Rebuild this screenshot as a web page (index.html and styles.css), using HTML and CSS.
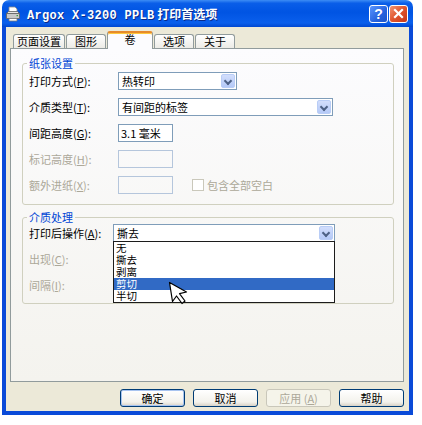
FILE: index.html
```html
<!DOCTYPE html>
<html lang="zh-CN">
<head>
  <meta charset="UTF-8" />
  <title>Argox X-3200 PPLB 打印首选项</title>
  <link rel="stylesheet" href="styles.css">
</head>
<body>
  <div class="window">
    <div class="titlebar">
      <svg class="app-icon" width="16" height="16" viewBox="0 0 16 16">
        <path d="M4 1h6l2 2v4H4z" fill="#fff" stroke="#8a8a8a" stroke-width="0.8"/>
        <path d="M1.5 7.5h13v5h-13z" fill="#c8c8c8" stroke="#5f5f5f" stroke-width="0.8"/>
        <path d="M1.5 7.5l2-2h9l2 2z" fill="#e6e6e6" stroke="#5f5f5f" stroke-width="0.8"/>
        <path d="M4 12.5h8v2.5H4z" fill="#fff" stroke="#7a7a7a" stroke-width="0.8"/>
        <rect x="11.5" y="9" width="1.5" height="1.2" fill="#3c9a3c"/>
      </svg>
      <span class="title"><span class="latin">Argox X-3200 PPLB</span> 打印首选项</span>
      <span class="caption-btns">
        <span class="cap-btn help">?</span>
        <span class="cap-btn close">
          <svg width="11" height="11" viewBox="0 0 11 11"><path d="M2 2l7 7M9 2l-7 7" stroke="#fff" stroke-width="2.2" stroke-linecap="square"/></svg>
        </span>
      </span>
    </div>

    <div class="client">
      <div class="tabs">
        <span class="tab">页面设置</span>
        <span class="tab">图形</span>
        <span class="tab active">卷</span>
        <span class="tab">选项</span>
        <span class="tab">关于</span>
      </div>

      <div class="panel">
        <fieldset class="group paper">
          <legend>纸张设置</legend>
          <div class="row">
            <label>打印方式(<u>P</u>):</label>
            <div class="combo w-short"><span class="value">热转印</span><span class="arrow"></span></div>
          </div>
          <div class="row">
            <label>介质类型(<u>T</u>):</label>
            <div class="combo w-long"><span class="value">有间距的标签</span><span class="arrow"></span></div>
          </div>
          <div class="row">
            <label>间距高度(<u>G</u>):</label>
            <div class="field">3.1 毫米</div>
          </div>
          <div class="row off">
            <label>标记高度(<u>H</u>):</label>
            <div class="field"></div>
          </div>
          <div class="row off">
            <label>额外进纸(<u>X</u>):</label>
            <div class="field"></div>
            <span class="check"></span>
            <span>包含全部空白</span>
          </div>
        </fieldset>

        <fieldset class="group media">
          <legend>介质处理</legend>
          <div class="row">
            <label>打印后操作(<u>A</u>):</label>
            <div class="combo w-wide">
              <span class="value">撕去</span><span class="arrow"></span>
              <div class="list">
                <div>无</div>
                <div>撕去</div>
                <div>剥离</div>
                <div class="sel">剪切</div>
                <div>半切</div>
              </div>
            </div>
          </div>
          <div class="row off">
            <label>出现(<u>C</u>):</label>
          </div>
          <div class="row off">
            <label>间隔(<u>I</u>):</label>
          </div>
        </fieldset>
      </div>

      <div class="buttons">
        <button class="btn default">确定</button>
        <button class="btn">取消</button>
        <button class="btn" disabled>应用 (<u>A</u>)</button>
        <button class="btn">帮助</button>
      </div>
    </div>

    <svg class="cursor" width="24" height="28" viewBox="0 0 24 28">
      <path d="M1.5 1.5l3 19 4-5.5 5.5 7.5 3-2.5-5.5-7.3 7-1.7z" fill="#fff" stroke="#000" stroke-width="1.2" stroke-linejoin="round"/>
    </svg>
  </div>
</body>
</html>
```

FILE: styles.css
```css
* {
  box-sizing: border-box;
}

body {
  margin: 0;
  background: #fff;
  font-family: "Noto Sans CJK SC", "Noto Sans", sans-serif;
  font-size: 11px;
  color: #000;
}

.window {
  position: relative;
  width: 411px;
  margin-left: 2px;
}

/* title bar */
.titlebar {
  display: flex;
  align-items: center;
  height: 27px;
  padding: 0 5px 0 3px;
  border-radius: 7px 7px 0 0;
  background: linear-gradient(#3d8df5 0, #0a5ee8 12%, #0054e3 45%, #0a5fec 85%, #0047d0 100%);
  color: #fff;
}

.app-icon {
  flex: none;
}

.title {
  margin-left: 6px;
  font-weight: bold;
  font-size: 12px;
  text-shadow: 1px 1px #0a2b8a;
  white-space: nowrap;
}

.title .latin {
  font-family: "Liberation Mono", "DejaVu Sans Mono", monospace;
  font-size: 12px;
  letter-spacing: 0.3px;
}

.caption-btns {
  display: flex;
  margin-left: auto;
  gap: 1px;
}

.cap-btn {
  display: flex;
  align-items: center;
  justify-content: center;
  width: 19px;
  height: 18px;
  border: 1px solid #fff;
  border-radius: 3px;
  font: bold 14px "Liberation Sans", sans-serif;
}

.cap-btn.help {
  background: linear-gradient(135deg, #5a95ff, #2663de 60%, #1d55c9);
}

.cap-btn.close {
  background: linear-gradient(135deg, #f29573, #e0542c 50%, #c4371a);
}

/* client area */
.client {
  border: 4px solid #0a4ad8;
  border-top: 0;
  background: #ece9d8;
  padding: 4px 5px 4px 4px;
}

.tabs {
  display: flex;
  align-items: flex-end;
  gap: 1px;
  height: 17px;
  padding-left: 3px;
  position: relative;
  z-index: 1;
}

.tab {
  height: 14px;
  min-width: 40px;
  padding: 0 3px;
  border: 1px solid #919b9c;
  border-bottom: 0;
  border-radius: 3px 3px 0 0;
  background: linear-gradient(#fff, #ecebe6);
  text-align: center;
  line-height: 13px;
}

.tab.active {
  width: 46px;
  height: 18px;
  margin-bottom: -1px;
  border-top: 2px solid #e68b2c;
  box-shadow: inset 0 1px #ffc83c;
  background: #fcfcfe;
  line-height: 12px;
}

.panel {
  height: 334px;
  padding: 8px 9px 0 11px;
  border: 1px solid #919b9c;
  background: linear-gradient(#fcfcfe, #f4f3ee);
}

/* group boxes */
.group {
  margin: 0;
  min-width: 0;
  padding: 2px 6px 10px;
  border: 1px solid #d0d0bf;
  border-radius: 3px;
}

.group legend {
  margin-left: -2px;
  padding: 0 2px;
  line-height: 13px;
  color: #0046d5;
}

.group.media {
  margin-top: 6px;
  padding-top: 0;
  padding-bottom: 9px;
}

.row {
  display: flex;
  align-items: center;
  height: 18px;
}

.row + .row {
  margin-top: 8px;
}

.paper label {
  width: 89px;
}

.media label {
  width: 84px;
}

.row.off {
  color: #aca899;
}

.combo {
  position: relative;
  display: flex;
  height: 18px;
  border: 1px solid #7f9db9;
  background: #fff;
  color: #000;
}

.combo .value {
  flex: 1;
  padding-left: 3px;
  line-height: 16px;
}

.combo .arrow {
  width: 14px;
  margin: 1px;
  border: 1px solid #b9cdf6;
  border-radius: 2px;
  background: linear-gradient(#d2defc, #b4c9f7);
  position: relative;
}

.combo .arrow::after {
  content: "";
  position: absolute;
  left: 3px;
  top: 3px;
  width: 4px;
  height: 4px;
  border-right: 2px solid #4d6185;
  border-bottom: 2px solid #4d6185;
  transform: rotate(45deg);
}

.w-short { width: 119px; }
.w-long { width: 215px; }
.w-wide { width: 222px; }

.field {
  width: 55px;
  height: 18px;
  padding-left: 2px;
  border: 1px solid #7f9db9;
  background: #fff;
  line-height: 16px;
}

.off .field {
  border-color: #b5c6dc;
  background: transparent;
}

.check {
  width: 12px;
  height: 12px;
  margin: 0 3px 0 19px;
  border: 1px solid #cac8bb;
  background: #fff;
}

/* dropped-down list */
.list {
  position: absolute;
  left: -1px;
  right: -1px;
  top: 16px;
  border: 1px solid #1c1c1c;
  background: #fff;
  z-index: 2;
}

.list div {
  height: 12px;
  padding-left: 2px;
  font-size: 10.5px;
  line-height: 12px;
}

.list .sel {
  background: #316ac5;
  color: #fff;
}

/* bottom buttons */
.buttons {
  display: flex;
  justify-content: flex-end;
  gap: 8px;
  margin-top: 7px;
}

.btn {
  width: 65px;
  height: 18px;
  padding: 0;
  border: 1px solid #003c74;
  border-radius: 3px;
  background: linear-gradient(#fff, #f3f2ec 75%, #d8d2c6);
  font: inherit;
  line-height: 16px;
  color: #000;
}

.btn.default {
  box-shadow: inset 0 0 0 1px #a8c4f0;
}

.btn:disabled {
  border-color: #c9c7ba;
  background: #f5f4ea;
  color: #aca899;
}

.cursor {
  position: absolute;
  left: 166px;
  top: 281px;
  z-index: 3;
}
```
